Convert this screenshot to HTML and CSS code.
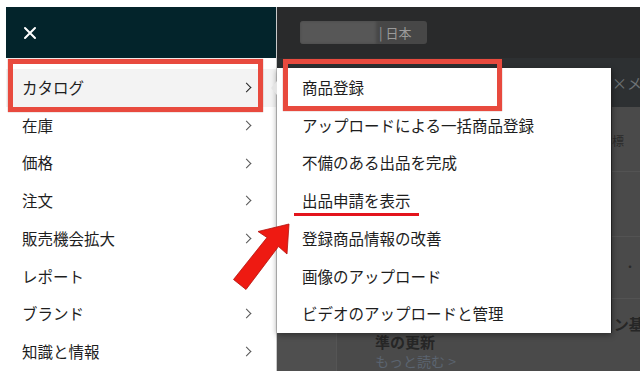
FILE: index.html
```html
<!DOCTYPE html>
<html lang="ja">
<head>
    <meta charset="UTF-8">
    <meta name="viewport" content="width=device-width, initial-scale=1.0">
    <title>カタログ メニュー</title>
    <link rel="stylesheet" href="styles.css">
</head>
<body>
    <div class="screen">
        <div class="drawer">
            <div class="drawer-head">
                <svg class="close" width="14" height="14" viewBox="0 0 14 14">
                    <path d="M2 2 L12 12 M12 2 L2 12" stroke="#fff" stroke-width="2" stroke-linecap="round"/>
                </svg>
            </div>
            <ul class="menu">
                <li class="active">カタログ<span class="chev"></span></li>
                <li>在庫<span class="chev"></span></li>
                <li>価格<span class="chev"></span></li>
                <li>注文<span class="chev"></span></li>
                <li>販売機会拡大<span class="chev"></span></li>
                <li>レポート</li>
                <li>ブランド<span class="chev"></span></li>
                <li>知識と情報<span class="chev"></span></li>
            </ul>
        </div>

        <div class="main">
            <div class="topbar">
                <div class="search">
                    <span class="search-blur"></span>
                    <span class="search-text">| 日本</span>
                </div>
            </div>
            <div class="band"><span>×メニューを閉じる</span></div>
            <div class="rows">
                <div class="row"><span class="label">指標</span></div>
                <div class="row"></div>
                <div class="row row-dots"><span class="label">・・</span></div>
            </div>
            <div class="news">
                <div class="news-side"></div>
                <div class="news-body">
                    <p class="news-title">出品商品詳細ページのコンディション基<br>準の更新</p>
                    <p class="news-more">もっと読む &gt;</p>
                </div>
            </div>
        </div>

        <div class="submenu">
            <span class="pointer"></span>
            <ul>
                <li>商品登録</li>
                <li>アップロードによる一括商品登録</li>
                <li>不備のある出品を完成</li>
                <li>出品申請を表示</li>
                <li>登録商品情報の改善</li>
                <li>画像のアップロード</li>
                <li>ビデオのアップロードと管理</li>
            </ul>
        </div>
    </div>

    <!-- annotations drawn over the screenshot -->
    <div class="mark mark-catalog"></div>
    <div class="mark mark-register"></div>
    <div class="underline"></div>
    <svg class="arrow" width="80" height="90" viewBox="220 210 80 90">
        <polygon points="289,224 287,254 278.5,246.5 246,289.5 233.5,279.5 267,237.5 258,231.5"
                 fill="#ee1a12" stroke="#b3120c" stroke-width="0.8" stroke-linejoin="miter"/>
    </svg>
</body>
</html>
```

FILE: styles.css
```css
* {
    margin: 0;
    padding: 0;
    box-sizing: border-box;
}

body {
    position: relative;
    height: 371px;
    overflow: hidden;
    background-color: #fff;
    font-family: "Noto Sans CJK JP", "Noto Sans", sans-serif;
    color: #1e1e1e;
}

.screen {
    position: relative;
    display: flex;
    height: 364px;
    margin: 7px 0 0 6px;
    background-color: #4a4a4a;
    overflow: hidden;
}

/* left drawer */
.drawer {
    flex: none;
    width: 271px;
    display: flex;
    flex-direction: column;
    background-color: #fff;
    border-right: 1px solid #c9c9c9;
}

.drawer-head {
    height: 51px;
    display: flex;
    align-items: center;
    padding-left: 17px;
    background-color: #03242b;
}

.menu {
    list-style: none;
    padding-top: 11px;
}

.menu li {
    height: 37.7px;
    display: flex;
    align-items: center;
    justify-content: space-between;
    padding: 0 24px 0 16px;
    font-size: 15.5px;
    line-height: 1;
}

.menu li.active {
    background-color: #f3f3f3;
}

.chev {
    width: 7px;
    height: 7px;
    margin-right: 2px;
    border-top: 1.6px solid #555;
    border-right: 1.6px solid #555;
    transform: rotate(45deg);
}

.menu li.active .chev {
    border-color: #222;
}

/* dimmed page behind */
.main {
    flex: 1;
    display: flex;
    flex-direction: column;
}

.topbar {
    height: 51px;
    display: flex;
    align-items: center;
    padding-left: 23px;
    background-color: #292a2b;
}

.search {
    width: 127px;
    height: 23px;
    display: flex;
    align-items: center;
    border-radius: 3px;
    background-color: #474747;
    overflow: hidden;
}

.search-blur {
    width: 76px;
    height: 100%;
    background-color: #575757;
    filter: blur(1.5px);
}

.search-text {
    padding-left: 3px;
    font-size: 13px;
    color: #9a9a9a;
}

.band {
    height: 50px;
    display: flex;
    align-items: center;
    padding-left: 335px;
    background-color: #2d3032;
    white-space: nowrap;
    font-size: 15px;
    color: #6d7275;
}

.rows {
    display: flex;
    flex-direction: column;
}

.row {
    height: 65px;
    padding: 24px 0 0 323px;
    border-bottom: 1px solid #535353;
    white-space: nowrap;
    line-height: 16px;
}

.row.row-dots {
    height: 62px;
    padding: 20px 0 0 347px;
}

.row .label {
    font-size: 12px;
    color: #2a2a2a;
}

.news {
    flex: 1;
    display: flex;
}

.news-side {
    width: 60px;
    background-color: #4f4f4f;
    border-right: 1px solid #555;
}

.news-body {
    padding: 16px 0 0 38px;
    white-space: nowrap;
}

.news-title {
    font-size: 15px;
    font-weight: bold;
    line-height: 18px;
    color: #262626;
}

.news-more {
    font-size: 14px;
    line-height: 20px;
    color: #5b6470;
}

/* flyout */
.submenu {
    position: absolute;
    left: 271px;
    top: 61px;
    width: 335px;
    height: 265px;
    background-color: #fff;
    border-right: 1px solid #222;
    box-shadow: 0 2px 6px rgba(0, 0, 0, 0.4);
}

.submenu .pointer {
    position: absolute;
    left: -6px;
    top: 13px;
    border-top: 7px solid transparent;
    border-bottom: 7px solid transparent;
    border-right: 6px solid #e4e4e4;
}

.submenu ul {
    list-style: none;
    padding-top: 1px;
}

.submenu li {
    height: 37.7px;
    display: flex;
    align-items: center;
    padding-left: 25px;
    font-size: 15.5px;
    line-height: 1;
}

/* red annotations */
.mark {
    position: absolute;
    border: 5px solid #e84a3e;
    box-shadow: 0 0 1px rgba(120, 20, 10, 0.6);
}

.mark-catalog {
    left: 8px;
    top: 59px;
    width: 255px;
    height: 53px;
}

.mark-register {
    left: 283px;
    top: 59px;
    width: 219px;
    height: 52px;
}

.underline {
    position: absolute;
    left: 294px;
    top: 213px;
    width: 125px;
    height: 3px;
    background-color: #e3141c;
}

.arrow {
    position: absolute;
    left: 220px;
    top: 210px;
}
```
